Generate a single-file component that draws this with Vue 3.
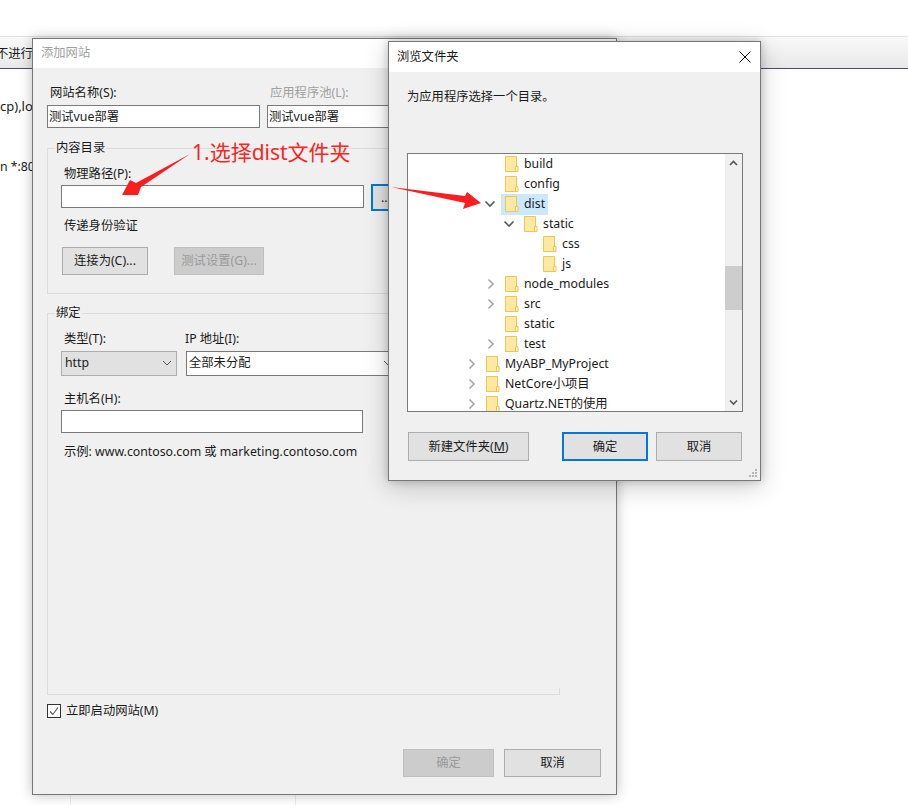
<script setup>
const treeRows = [
  { name: "build", depth: 1 },
  { name: "config", depth: 1 },
  { name: "dist", depth: 1, arrow: "open", selected: true },
  { name: "static", depth: 2, arrow: "open" },
  { name: "css", depth: 3 },
  { name: "js", depth: 3 },
  { name: "node_modules", depth: 1, arrow: "closed" },
  { name: "src", depth: 1, arrow: "closed" },
  { name: "static", depth: 1 },
  { name: "test", depth: 1, arrow: "closed" },
  { name: "MyABP_MyProject", depth: 0, arrow: "closed" },
  { name: "NetCore小项目", depth: 0, arrow: "closed" },
  { name: "Quartz.NET的使用", depth: 0, arrow: "closed" },
];

const rowIndent = (row) => 57 + row.depth * 19 + "px";
</script>

<template>
  <div class="stage">
    <div class="tabbar"><span class="tab-text">不进行</span></div>
    <div class="log-line first">cp),lo</div>
    <div class="log-line second">en *:80</div>
    <div class="rule rule-a"></div>
    <div class="rule rule-b"></div>

    <!-- add site dialog -->
    <section class="window site">
      <header class="title muted">添加网站</header>
      <div class="site-body">
        <div class="name-row">
          <div class="name-col">
            <label class="lbl">网站名称(S):</label>
            <div class="input name-input">测试vue部署</div>
          </div>
          <div class="pool-col">
            <label class="lbl muted">应用程序池(L):</label>
            <div class="input pool-input">测试vue部署</div>
          </div>
        </div>

        <fieldset class="group content-group">
          <legend>内容目录</legend>
          <label class="lbl">物理路径(P):</label>
          <div class="path-row">
            <div class="input path-input"></div>
            <button class="btn browse" type="button">...</button>
          </div>
          <div class="lbl auth">传递身份验证</div>
          <div class="auth-buttons">
            <button class="btn connect" type="button">连接为(C)...</button>
            <button class="btn test disabled" type="button">测试设置(G)...</button>
          </div>
        </fieldset>

        <fieldset class="group binding-group">
          <legend>绑定</legend>
          <div class="bind-row">
            <div>
              <label class="lbl">类型(T):</label>
              <div class="select type-select">
                <span>http</span>
                <svg width="10" height="6" viewBox="0 0 10 6"><path d="M1 1l4 4 4-4" fill="none" stroke="#555" /></svg>
              </div>
            </div>
            <div>
              <label class="lbl ip-lbl">IP 地址(I):</label>
              <div class="select ip-select">
                <span>全部未分配</span>
                <svg width="10" height="6" viewBox="0 0 10 6"><path d="M1 1l4 4 4-4" fill="none" stroke="#555" /></svg>
              </div>
            </div>
          </div>
          <label class="lbl host-lbl">主机名(H):</label>
          <div class="input host-input"></div>
          <div class="lbl example">示例: www.contoso.com 或 marketing.contoso.com</div>
        </fieldset>

        <div class="start-row">
          <span class="check">
            <svg width="12" height="12" viewBox="0 0 12 12"><path d="M2 6.5l2.8 3L10 2.5" fill="none" stroke="#555" stroke-width="1.1" /></svg>
          </span>
          <span>立即启动网站(M)</span>
        </div>

        <div class="site-actions">
          <button class="btn ok disabled" type="button">确定</button>
          <button class="btn cancel" type="button">取消</button>
        </div>
      </div>
    </section>

    <!-- browse folder dialog -->
    <section class="window browse-win">
      <header class="title browse-title">
        <span>浏览文件夹</span>
        <svg width="12" height="12" viewBox="0 0 12 12"><path d="M.5.5l11 11M11.5.5l-11 11" stroke="#111" fill="none" /></svg>
      </header>
      <div class="browse-body">
        <p class="hint">为应用程序选择一个目录。</p>
        <div class="tree">
          <ul class="rows">
            <li
              v-for="(row, i) in treeRows"
              :key="i"
              class="row"
              :style="{ paddingLeft: rowIndent(row) }"
            >
              <span class="chev">
                <svg v-if="row.arrow === 'open'" width="12" height="8" viewBox="0 0 12 8"><path d="M1.5 1.5L6 6l4.5-4.5" fill="none" stroke="#595959" stroke-width="1.6" /></svg>
                <svg v-else-if="row.arrow === 'closed'" class="chev-closed" width="8" height="12" viewBox="0 0 8 12"><path d="M1.5 1.5L6 6l-4.5 4.5" fill="none" stroke="#a6a6a6" stroke-width="1.6" /></svg>
              </span>
              <span class="item" :class="{ selected: row.selected }">
                <svg class="folder" width="14" height="16" viewBox="0 0 14 16">
                  <path d="M.5.5h11v15H.5z" fill="#fde8a4" stroke="#eec650" />
                  <path d="M10.5 10.5h2.5v5h-2.5z" fill="#fff3c8" stroke="#eec650" />
                </svg>
                <span>{{ row.name }}</span>
              </span>
            </li>
          </ul>
          <div class="scrollbar">
            <svg class="sb-arrow" width="17" height="17" viewBox="0 0 17 17"><path d="M5 11l3.5-3.5L12 11" fill="none" stroke="#555" stroke-width="1.6" /></svg>
            <div class="thumb"></div>
            <svg class="sb-arrow sb-down" width="17" height="17" viewBox="0 0 17 17"><path d="M5 6.5L8.5 10 12 6.5" fill="none" stroke="#555" stroke-width="1.6" /></svg>
          </div>
        </div>
        <div class="browse-actions">
          <button class="btn new-folder" type="button">新建文件夹(<u>M</u>)</button>
          <button class="btn primary" type="button">确定</button>
          <button class="btn plain" type="button">取消</button>
        </div>
      </div>
      <svg class="grip" width="10" height="10" viewBox="0 0 10 10">
        <path d="M7 1h2v2H7zM4 4h2v2H4zM7 4h2v2H7zM1 7h2v2H1zM4 7h2v2H4zM7 7h2v2H7z" fill="#b5b5b5" />
      </svg>
    </section>

    <!-- red annotations drawn on top of the screenshot -->
    <svg class="marks" width="908" height="805" viewBox="0 0 908 805">
      <path d="M190 154L136 183l-6-3-8 15h16l3-8z" fill="#fa1e1e" />
      <path d="M391 187l74 9 2-4 14 11-18 6 2-6z" fill="#fa1e1e" />
    </svg>
    <div class="note">1.选择dist文件夹</div>
  </div>
</template>

<style scoped>
.stage {
  position: relative;
  width: 908px;
  height: 805px;
  overflow: hidden;
  background: #fff;
  color: #1a1a1a;
  font-family: "Noto Sans", "Noto Sans CJK SC", sans-serif;
  font-size: 12.3px;
  line-height: 16px;
}

.tabbar {
  margin-top: 37px;
  height: 31px;
  box-sizing: content-box;
  border-top: 1px solid #e2e2e2;
  border-bottom: 1px solid #4a4a78;
  background: linear-gradient(#f9f9f9, #e9e9e9);
  display: flex;
  align-items: center;
  position: relative;
  top: -1px;
}

.tab-text {
  margin-left: -4px;
  padding-top: 2px;
}

.log-line {
  white-space: nowrap;
}

.log-line.first {
  margin-top: 28px;
  font-size: 13px;
}

.log-line.second {
  margin-top: 45px;
  margin-left: -7px;
}

.rule {
  position: absolute;
  top: 790px;
  bottom: 0;
  width: 1px;
  background: #e3ecf5;
}

.rule-a {
  left: 70px;
}

.rule-b {
  left: 295px;
}

.window {
  position: absolute;
  box-sizing: border-box;
  background: #f0f0f0;
  border: 1px solid #777;
}

.site {
  left: 32px;
  top: 38px;
  width: 585px;
  height: 757px;
  box-shadow: 0 0 12px rgba(0, 0, 0, 0.26);
}

.browse-win {
  left: 388px;
  top: 41px;
  width: 373px;
  height: 440px;
  box-shadow: 0 6px 24px rgba(0, 0, 0, 0.2), 0 0 8px rgba(0, 0, 0, 0.2);
}

.title {
  height: 29px;
  padding-left: 8px;
  background: #fff;
  display: flex;
  align-items: center;
}

.site > .title {
  box-sizing: border-box;
  padding-bottom: 2px;
}

.muted {
  color: #a0a0a0;
}

.site-body {
  padding: 16px 15px 0 14px;
}

.lbl {
  display: block;
  padding: 1px 0 0 3px;
  margin-bottom: -1px;
}

.input {
  box-sizing: border-box;
  height: 23px;
  border: 1px solid #7a7a7a;
  background: #fff;
  line-height: 21px;
  padding-left: 1px;
}

.name-row {
  display: flex;
  gap: 7px;
}

.name-col {
  width: 213px;
}

.pool-col {
  width: 200px;
}

.name-row .input {
  margin-top: 5px;
}

.group {
  box-sizing: border-box;
  width: 513px;
  min-width: 0;
  margin: 0;
  padding: 9px 0 0 13px;
  border: 1px solid #dcdcdc;
}

.group legend {
  padding: 0 1px;
  margin-left: -6px;
  line-height: 16px;
}

.content-group {
  margin-top: 12px;
  height: 154px;
}

.binding-group {
  position: relative;
  margin-top: 11px;
  height: 390px;
  border-right: none;
}

/* only a short stub of the right edge shows in the original */
.binding-group::after {
  content: "";
  position: absolute;
  right: 0;
  bottom: 0;
  width: 1px;
  height: 6px;
  background: #dcdcdc;
}

.path-row {
  display: flex;
  gap: 7px;
  margin-top: 4px;
}

.path-input {
  width: 303px;
}

.btn {
  box-sizing: border-box;
  padding: 0;
  font: inherit;
  color: #1a1a1a;
  background: #e1e1e1;
  border: 1px solid #adadad;
  border-radius: 0;
}

.browse {
  width: 30px;
  height: 27px;
  margin: -1px 0 -3px;
  border: 2px solid #0078d7;
}

.auth {
  margin-top: 9px;
}

.auth-buttons {
  display: flex;
  gap: 26px;
  margin: 14px 0 0 1px;
}

.connect {
  width: 86px;
  height: 28px;
}

.test {
  width: 90px;
  height: 28px;
}

.disabled {
  color: #9a9a9a;
  background: #cccccc;
  border-color: #bfbfbf;
}

.bind-row {
  display: flex;
  gap: 9px;
}

.select {
  box-sizing: border-box;
  height: 25px;
  margin-top: 5px;
  display: flex;
  align-items: center;
  justify-content: space-between;
  padding: 0 4px 1px 3px;
  border: 1px solid #adadad;
}

.type-select {
  width: 116px;
  background: #e1e1e1;
}

.ip-select {
  width: 212px;
  padding-left: 2px;
  background: #fff;
  border-color: #7a7a7a;
}

.ip-lbl {
  padding-left: 0;
  margin-left: -1px;
}

.host-lbl {
  margin-top: 14px;
}

.host-input {
  width: 302px;
  margin-top: 4px;
}

.example {
  margin-top: 10px;
}

.start-row {
  display: flex;
  align-items: center;
  gap: 5px;
  margin-top: 8px;
}

.check {
  box-sizing: border-box;
  width: 14px;
  height: 14px;
  border: 1px solid #333;
  background: #fff;
  display: flex;
}

.site-actions {
  display: flex;
  justify-content: flex-end;
  gap: 10px;
  margin-top: 30px;
}

.ok {
  width: 91px;
  height: 28px;
}

.cancel {
  width: 97px;
  height: 28px;
}

.browse-title {
  justify-content: space-between;
  padding-right: 9px;
  height: 30px;
}

.browse-body {
  padding: 17px 0 0 18px;
}

.hint {
  margin: 0;
  line-height: 16px;
}

.tree {
  box-sizing: border-box;
  width: 336px;
  height: 259px;
  margin-top: 48px;
  border: 1px solid #7a7a7a;
  background: #fff;
  display: flex;
  overflow: hidden;
}

.rows {
  list-style: none;
  flex: 1;
  margin: 0;
  padding: 0;
}

.row {
  display: flex;
  align-items: center;
  height: 20px;
}

.chev {
  width: 17px;
  flex: none;
  display: flex;
  align-items: center;
  justify-content: flex-start;
}

.chev-closed {
  margin-left: 3px;
}

.item {
  display: flex;
  align-items: center;
  gap: 5px;
  height: 21px;
  padding: 0 3px 0 4px;
}

.item.selected {
  background: #cce8ff;
}

.folder {
  flex: none;
}

.scrollbar {
  width: 17px;
  flex: none;
  display: flex;
  flex-direction: column;
  background: #f0f0f0;
}

.sb-arrow {
  flex: none;
}

.thumb {
  height: 44px;
  margin-top: 95px;
  background: #cdcdcd;
}

.sb-down {
  margin-top: auto;
}

.browse-actions {
  display: flex;
  gap: 8px;
  margin: 20px 0 0 1px;
}

.browse-actions .btn {
  height: 29px;
}

.new-folder {
  width: 121px;
  margin-right: 25px;
}

.primary {
  width: 86px;
  border: 2px solid #0078d7 !important;
}

.plain {
  width: 86px;
}

.grip {
  position: absolute;
  right: 2px;
  bottom: 2px;
}

.marks {
  position: absolute;
  left: 0;
  top: 0;
  pointer-events: none;
}

.note {
  position: absolute;
  left: 192px;
  top: 138px;
  color: #f7261f;
  font-size: 21px;
  line-height: 28px;
  white-space: nowrap;
}
</style>
